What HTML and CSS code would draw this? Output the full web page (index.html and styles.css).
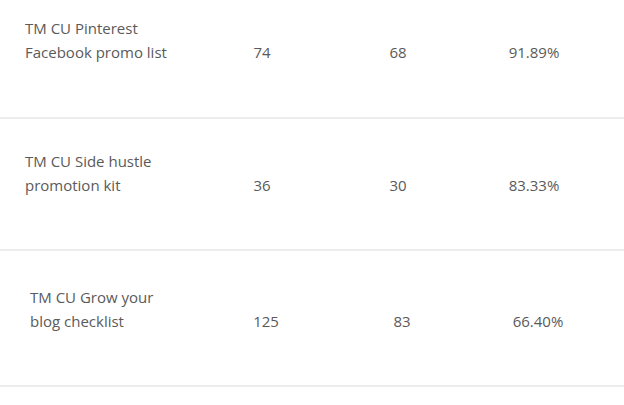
FILE: index.html
```html
<!DOCTYPE html>
<html>
<head>
<meta charset="utf-8">
<link rel="stylesheet" href="styles.css">
</head>
<body>
<div class="table">
  <div class="row row-first">
    <div class="name">TM CU Pinterest<br>Facebook promo list</div>
    <div class="num">74</div>
    <div class="num">68</div>
    <div class="num">91.89%</div>
  </div>
  <div class="row">
    <div class="name">TM CU Side hustle<br>promotion kit</div>
    <div class="num">36</div>
    <div class="num">30</div>
    <div class="num">83.33%</div>
  </div>
  <div class="row row-shift">
    <div class="name">TM CU Grow your<br>blog checklist</div>
    <div class="num">125</div>
    <div class="num">83</div>
    <div class="num">66.40%</div>
  </div>
</div>
</body>
</html>
```
FILE: styles.css
```css
html, body {
  margin: 0;
  padding: 0;
  background: #ffffff;
}
body {
  font-family: "Open Sans", Lato, sans-serif;
  font-size: 15px;
  color: #5a5a5a;
}
.table {
  display: flex;
  flex-direction: column;
}
.row {
  display: grid;
  grid-template-columns: 169px 136px 136px 136px;
  align-items: end;
  padding: 30px 0 52px 25px;
  border-bottom: 2px solid #ececec;
}
.row-first {
  padding-top: 16px;
  padding-bottom: 53px;
}
.row-shift {
  padding-top: 34px;
  padding-left: 29px;
}
.row-shift .name {
  padding-left: 1px;
}
.name {
  line-height: 24px;
}
.num {
  line-height: 24px;
  text-align: center;
}
```
